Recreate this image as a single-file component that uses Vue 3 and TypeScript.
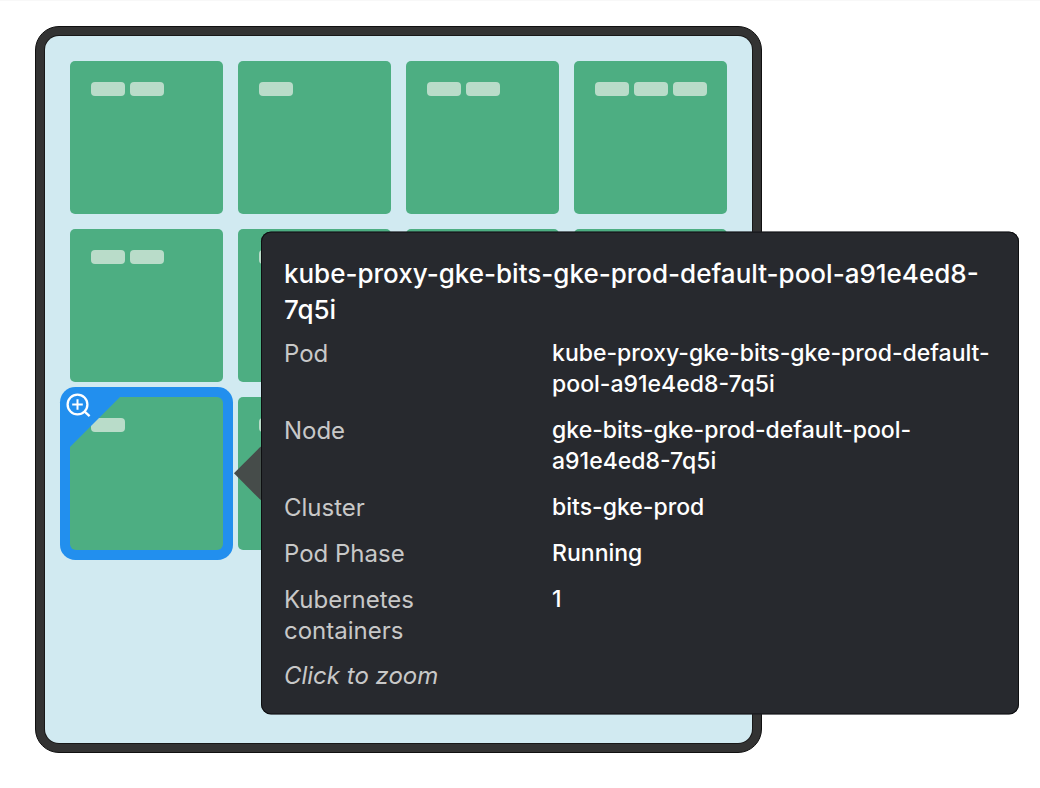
<script setup lang="ts">
interface Pod {
  id: number
  containers: number
  selected?: boolean
}

interface Detail {
  label: string
  value: string
}

const podName = 'kube-proxy-gke-bits-gke-prod-default-pool-a91e4ed8-7q5i'

const pods: Pod[] = [
  { id: 1, containers: 2 },
  { id: 2, containers: 1 },
  { id: 3, containers: 2 },
  { id: 4, containers: 3 },
  { id: 5, containers: 2 },
  { id: 6, containers: 1 },
  { id: 7, containers: 1 },
  { id: 8, containers: 1 },
  { id: 9, containers: 1, selected: true },
  { id: 10, containers: 1 },
]

const details: Detail[] = [
  { label: 'Pod', value: podName },
  { label: 'Node', value: 'gke-bits-gke-prod-default-pool-a91e4ed8-7q5i' },
  { label: 'Cluster', value: 'bits-gke-prod' },
  { label: 'Pod Phase', value: 'Running' },
  { label: 'Kubernetes containers', value: '1' },
]
</script>

<template>
  <main class="page">
    <section class="frame">
      <ul class="pods">
        <li v-for="pod in pods" :key="pod.id" class="cell" :class="{ selected: pod.selected }">
          <button type="button" class="tile" :aria-label="`Pod ${pod.id}`">
            <span v-for="n in pod.containers" :key="n" class="chip"></span>
          </button>
          <template v-if="pod.selected">
            <span class="corner"></span>
            <svg class="zoom" viewBox="0 0 26 26" fill="none" stroke="#fff" stroke-width="2.3" aria-hidden="true">
              <circle cx="12.5" cy="12.5" r="9.9" />
              <path d="M12.5 7.2v10.6M7.2 12.5h10.6" stroke-width="2" />
              <path d="M19.4 19.4l5.2 4.8" />
            </svg>
            <div class="tooltip" role="tooltip">
              <h2 class="title">{{ podName }}</h2>
              <dl class="details">
                <template v-for="row in details" :key="row.label">
                  <dt>{{ row.label }}</dt>
                  <dd>{{ row.value }}</dd>
                </template>
              </dl>
              <p class="hint">Click to zoom</p>
            </div>
          </template>
        </li>
      </ul>
    </section>
  </main>
</template>

<style>
body {
  margin: 0;
  background: #fff;
}
</style>

<style scoped>
.page {
  box-sizing: border-box;
  padding: 25px 36px 35px 35px;
  border-top: 1px solid #f8f8f8;
  font-family: Inter, "Liberation Sans", Arial, sans-serif;
}

.frame {
  box-sizing: border-box;
  width: 75%;
  aspect-ratio: 1;
  padding: 9px;
  border: 1px solid #101010;
  border-radius: 24px;
  background: #333;
}

.pods {
  box-sizing: border-box;
  display: grid;
  grid-template-columns: repeat(4, minmax(0, 1fr));
  align-content: start;
  gap: 15px;
  height: 100%;
  margin: 0;
  padding: 25px;
  border-radius: 14px;
  background: #d1eaf1;
  box-shadow: 0 0 0 1px #181818;
  list-style: none;
}

.cell {
  position: relative;
  aspect-ratio: 1;
}

.tile {
  display: flex;
  align-items: flex-start;
  gap: 5px;
  box-sizing: border-box;
  width: 100%;
  height: 100%;
  padding: 21px 0 0 21px;
  border: 0;
  border-radius: 5px;
  background: #4dae82;
  cursor: pointer;
}

.selected .tile {
  border-radius: 6px;
  box-shadow: 0 0 0 10px #228fee;
}

.chip {
  width: 34px;
  height: 14px;
  border-radius: 4px;
  background: #b9dcc9;
}

.corner {
  position: absolute;
  top: 0;
  left: 0;
  width: 50px;
  height: 50px;
  background: #228fee;
  clip-path: polygon(0 0, 100% 0, 0 100%);
  pointer-events: none;
}

.zoom {
  position: absolute;
  top: -5px;
  left: -5px;
  width: 26px;
  height: 26px;
  pointer-events: none;
}

.tooltip {
  position: absolute;
  z-index: 1;
  top: 50%;
  left: calc(100% + 38px);
  box-sizing: border-box;
  width: calc(100vw - 282px);
  padding: 24px 20px 24px 23px;
  border-radius: 10px;
  background: #27292e;
  box-shadow: inset 0 0 0 1px #0e0f11;
  color: #fff;
  transform: translateY(-50%);
}

.tooltip::before {
  content: "";
  position: absolute;
  top: 50%;
  right: 100%;
  width: 27px;
  height: 54px;
  background: #464c4a;
  clip-path: polygon(100% 0, 100% 100%, 0 50%);
  transform: translateY(-50%);
}

.title {
  margin: 0 0 10px;
  font-size: 26px;
  font-weight: 500;
  line-height: 36px;
}

.details {
  display: grid;
  grid-template-columns: 3fr 5fr;
  row-gap: 15px;
  margin: 0 0 14px;
  font-size: 23px;
  font-weight: 500;
  line-height: 31px;
}

dt {
  padding-right: 48px;
  color: #c8c8c8;
  font-size: 24px;
  font-weight: 400;
}

dd {
  margin: 0;
}

.hint {
  margin: 0;
  color: #c8c8c8;
  font-size: 24px;
  font-style: italic;
  line-height: 31px;
}
</style>
